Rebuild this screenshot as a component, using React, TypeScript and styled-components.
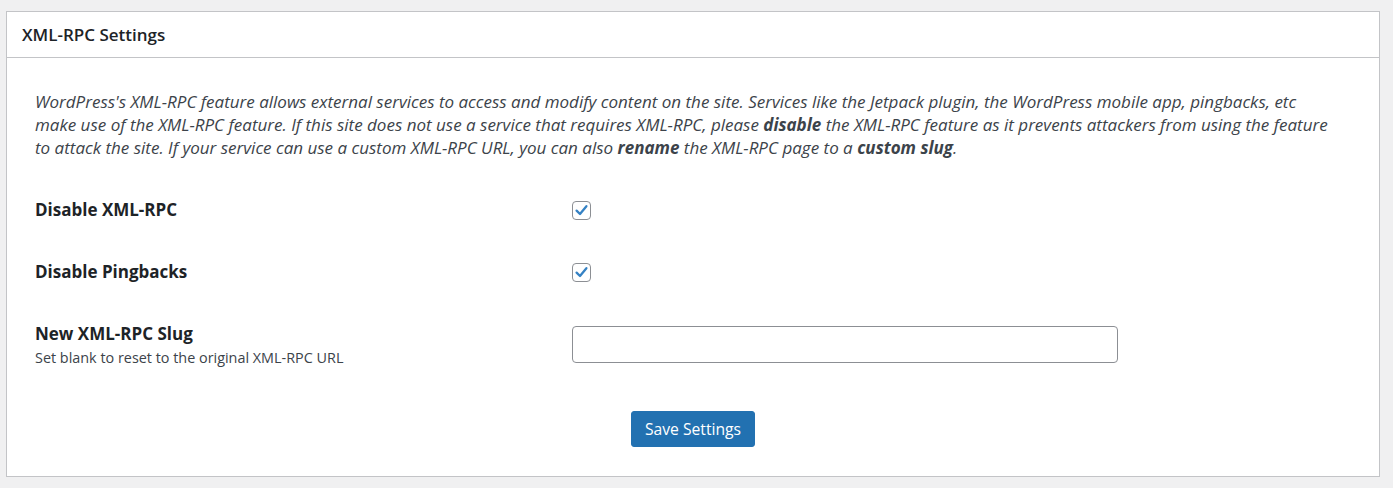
import React from "react";
import styled, { createGlobalStyle } from "styled-components";

const GlobalStyle = createGlobalStyle`
  html, body { margin: 0; padding: 0; }
  body {
    background: #f0f0f1;
    font-family: "Segoe UI", "Open Sans", sans-serif;
    color: #3c434a;
  }
`;

const Page = styled.div`
  padding: 11px 13px 10px 6px;
`;

const Panel = styled.section`
  background: #fff;
  border: 1px solid #c3c4c7;
`;

const Header = styled.header`
  height: 46px;
  box-sizing: border-box;
  display: flex;
  align-items: center;
  padding: 0 15px;
  border-bottom: 1px solid #c3c4c7;
`;

const Title = styled.h2`
  margin: 0;
  font-size: 17px;
  font-weight: 600;
  color: #1d2327;
`;

const Body = styled.div`
  padding: 32px 28px 29px 28px;
`;

const Intro = styled.p`
  margin: 0;
  font-size: 17px;
  line-height: 23px;
  font-style: italic;
  color: #3c434a;
  padding-right: 20px;
  b { font-weight: 700; }
`;

const Rows = styled.div`
  margin-top: 20px;
`;

const Row = styled.div<{ $align?: string }>`
  display: grid;
  grid-template-columns: 537px 546px;
  align-items: ${(p) => p.$align || "center"};
  padding: 20px 0;
`;

const LabelBlock = styled.div`
  display: flex;
  flex-direction: column;
  gap: 2px;
`;

const Label = styled.label`
  font-size: 17px;
  line-height: 22px;
  font-weight: 700;
  color: #1d2327;
`;

const Desc = styled.span`
  font-size: 14.4px;
  line-height: 22px;
  color: #3c434a;
`;

const CheckBox = styled.span`
  width: 19px;
  height: 19px;
  box-sizing: border-box;
  border: 1px solid #8c8f94;
  border-radius: 4px;
  display: inline-flex;
  align-items: center;
  justify-content: center;
  background: #fff;
`;

const TextInput = styled.input`
  width: 546px;
  height: 37px;
  box-sizing: border-box;
  border: 1px solid #8c8f94;
  border-radius: 4px;
  padding: 0 8px;
  font-size: 16px;
  margin-top: 3px;
  outline: none;
`;

const Footer = styled.div`
  display: flex;
  justify-content: center;
  margin-top: 22px;
`;

const Button = styled.button`
  height: 36px;
  padding: 0 13px;
  background: #2271b1;
  border: 1px solid #2271b1;
  border-radius: 3px;
  color: #fff;
  font-family: inherit;
  font-size: 15.7px;
  cursor: pointer;
`;

const Check = () => (
  <CheckBox>
    <svg width="15" height="15" viewBox="0 0 15 15">
      <path d="M2.6 7.6 L6 11 L12.4 3.2" fill="none" stroke="#3582c4" strokeWidth="2.3" strokeLinecap="round" strokeLinejoin="round" />
    </svg>
  </CheckBox>
);

export default function App() {
  return (
    <>
      <GlobalStyle />
      <Page>
        <Panel>
          <Header>
            <Title>XML-RPC Settings</Title>
          </Header>
          <Body>
            <Intro>
              WordPress's XML-RPC feature allows external services to access and modify content on the site. Services like the Jetpack plugin, the WordPress mobile app, pingbacks, etc make use of the XML-RPC feature. If this site does not use a service that requires XML-RPC, please <b>disable</b> the XML-RPC feature as it prevents attackers from using the feature to attack the site. If your service can use a custom XML-RPC URL, you can also <b>rename</b> the XML-RPC page to a <b>custom slug</b>.
            </Intro>
            <Rows>
              <Row>
                <Label>Disable XML-RPC</Label>
                <Check />
              </Row>
              <Row>
                <Label>Disable Pingbacks</Label>
                <Check />
              </Row>
              <Row $align="start">
                <LabelBlock>
                  <Label>New XML-RPC Slug</Label>
                  <Desc>Set blank to reset to the original XML-RPC URL</Desc>
                </LabelBlock>
                <TextInput type="text" defaultValue="" />
              </Row>
            </Rows>
            <Footer>
              <Button>Save Settings</Button>
            </Footer>
          </Body>
        </Panel>
      </Page>
    </>
  );
}
